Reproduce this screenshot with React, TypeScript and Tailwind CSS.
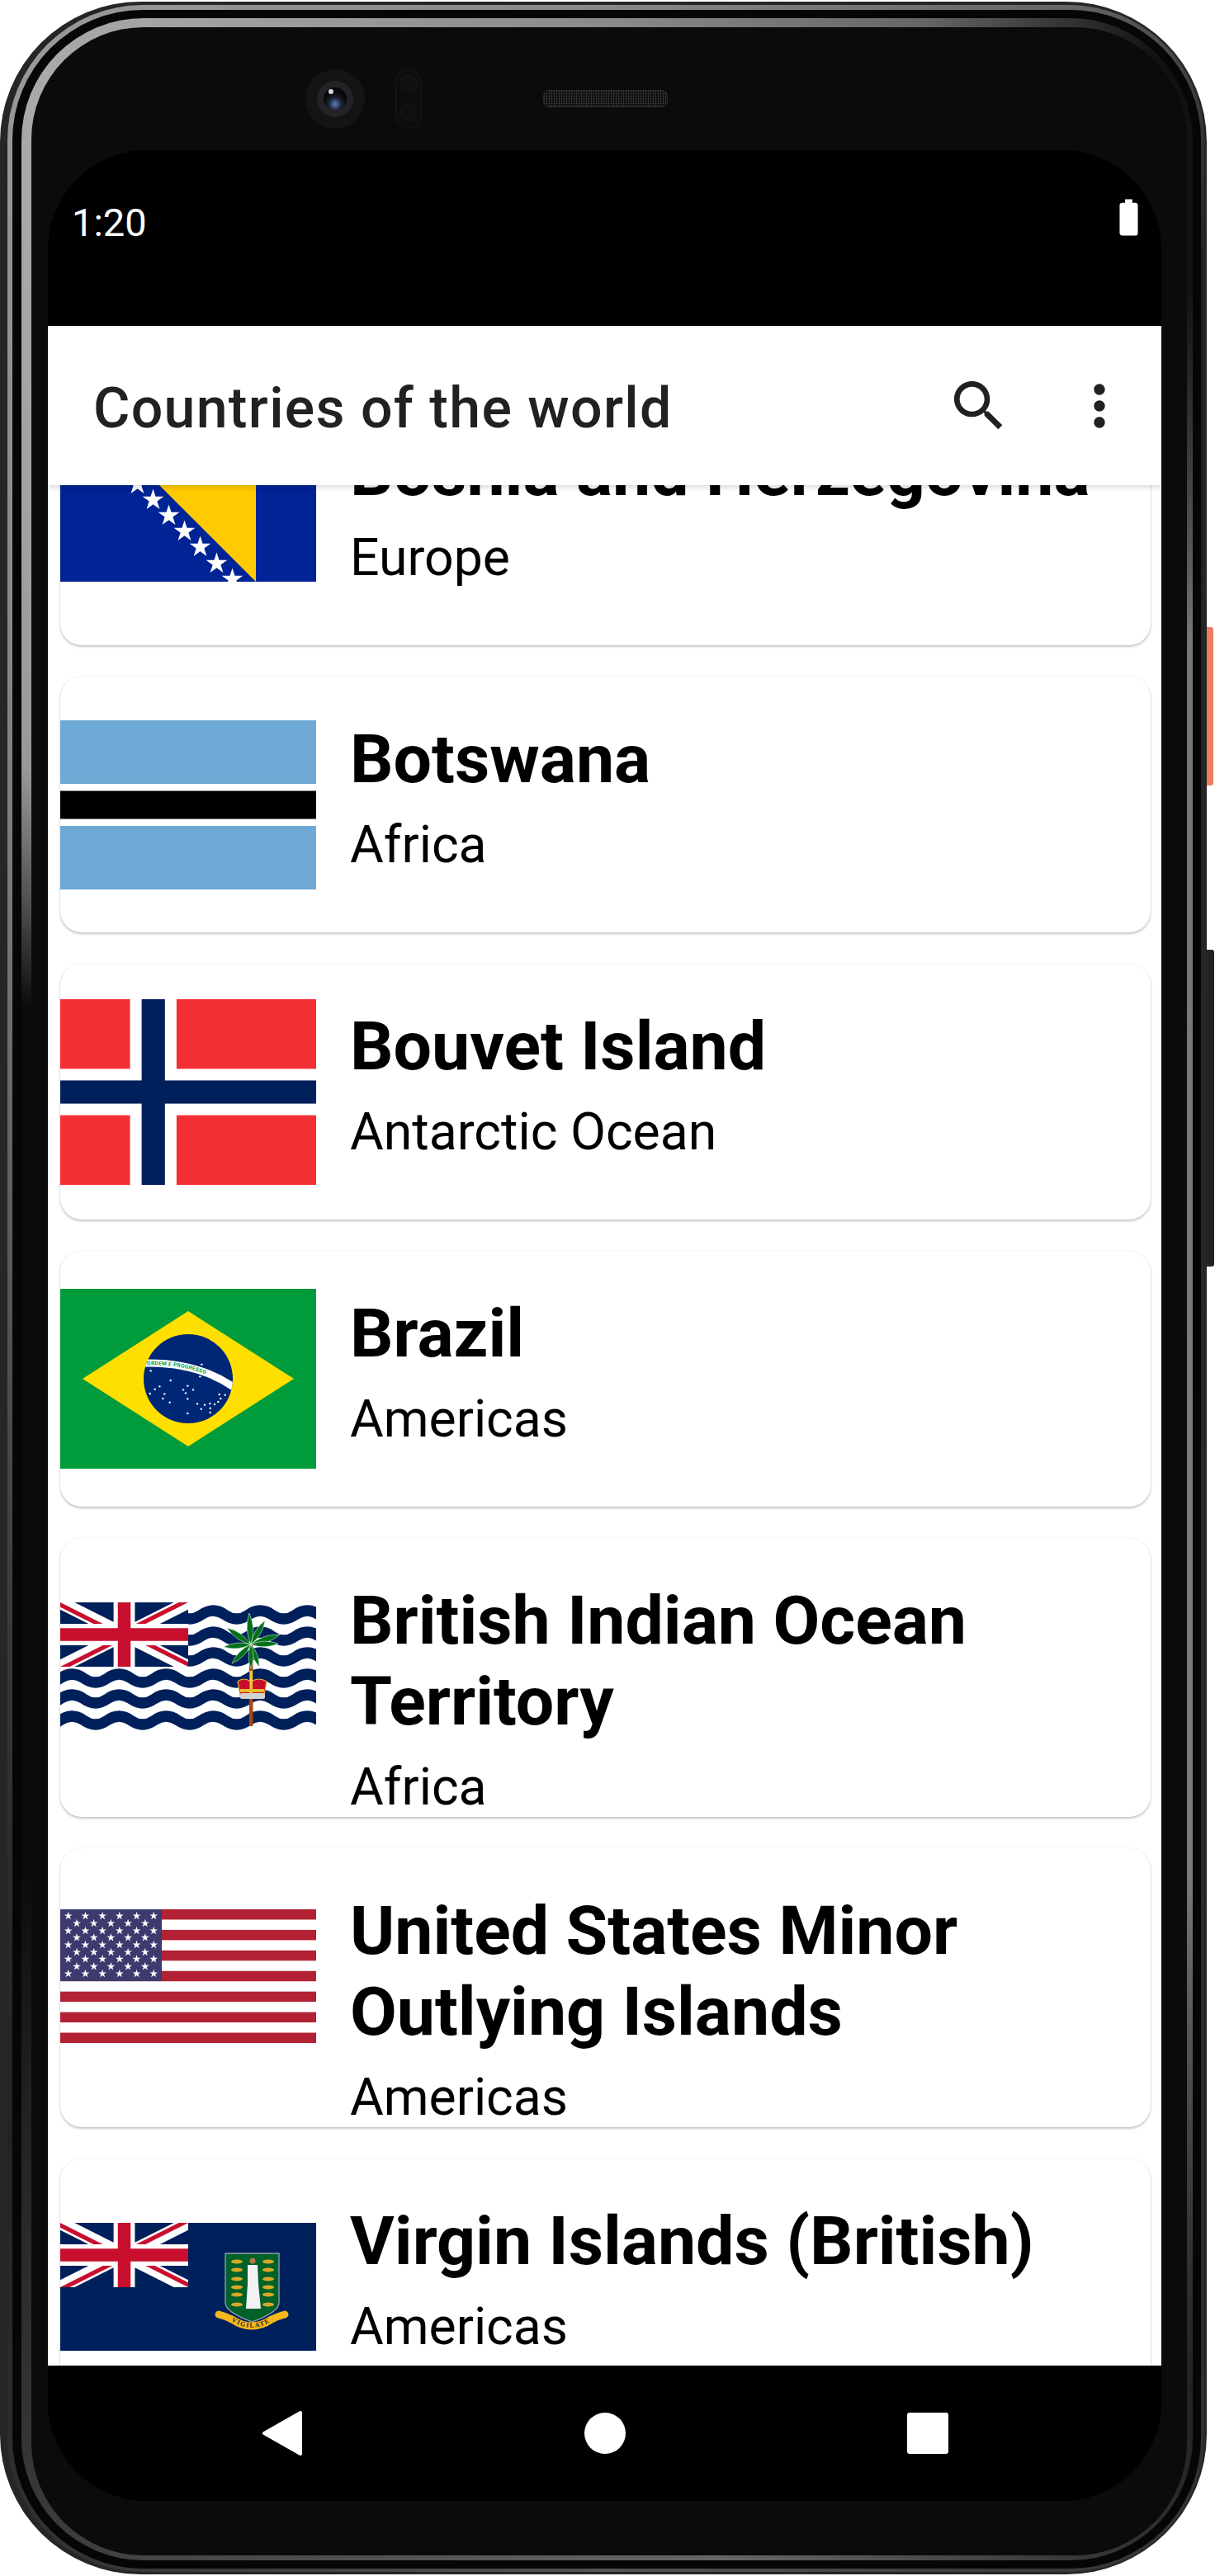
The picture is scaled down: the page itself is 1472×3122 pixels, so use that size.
import type { ReactNode } from "react"

const starPoints = (cx: number, cy: number, r: number) =>
  Array.from({ length: 10 }, (_, i) => {
    const a = (Math.PI / 5) * i - Math.PI / 2
    const d = i % 2 === 0 ? r : r * 0.38
    return `${(cx + d * Math.cos(a)).toFixed(2)},${(cy + d * Math.sin(a)).toFixed(2)}`
  }).join(" ")

function UnionJack({ id }: { id: string }) {
  return (
    <svg x="0" y="0" width="155" height="78" viewBox="0 0 60 30" preserveAspectRatio="none">
      <clipPath id={id}>
        <path d="M30,15h30v15zv15h-30zh-30v-15zv-15h30z" />
      </clipPath>
      <rect width="60" height="30" fill="#00205b" />
      <path d="M0,0L60,30M60,0L0,30" stroke="#fff" strokeWidth="6" />
      <path d="M0,0L60,30M60,0L0,30" clipPath={`url(#${id})`} stroke="#c8102e" strokeWidth="4" />
      <path d="M30,0v30M0,15h60" stroke="#fff" strokeWidth="10" />
      <path d="M30,0v30M0,15h60" stroke="#c8102e" strokeWidth="6" />
    </svg>
  )
}

function Bosnia() {
  const stars = [-1, 18, 37, 56, 75, 94, 113, 133, 152]
  return (
    <svg width="310" height="155" viewBox="0 0 310 155">
      <rect width="310" height="155" fill="#002395" />
      <polygon points="82,0 237,0 237,155" fill="#fecb00" />
      {stars.map((y) => (
        <polygon key={y} points={starPoints(y + 56.5, y, 13.5)} fill="#fff" />
      ))}
    </svg>
  )
}

function Botswana() {
  return (
    <svg width="310" height="205" viewBox="0 0 310 205">
      <rect width="310" height="205" fill="#6fa9d6" />
      <rect y="77" width="310" height="51" fill="#fff" />
      <rect y="85.5" width="310" height="34" fill="#000" />
    </svg>
  )
}

function Norway() {
  return (
    <svg width="310" height="225" viewBox="0 0 22 16" preserveAspectRatio="none">
      <rect width="22" height="16" fill="#f42f33" />
      <rect x="6" width="4" height="16" fill="#fff" />
      <rect y="6" width="22" height="4" fill="#fff" />
      <rect x="7" width="2" height="16" fill="#00205b" />
      <rect y="7" width="22" height="2" fill="#00205b" />
    </svg>
  )
}

function Brazil() {
  const stars = [
    [548, 481], [620, 516], [580, 538], [563, 548], [545, 564], [598, 565], [592, 582], [617, 596], [666, 550],
    [682, 536], [702, 550], [675, 562], [682, 583], [717, 601], [744, 605], [731, 620], [763, 600], [764, 617],
    [764, 633], [780, 603], [793, 594], [797, 567], [818, 569], [802, 582], [682, 636], [727, 502], [733, 458],
  ]
  return (
    <svg width="310" height="218" viewBox="0 0 310 218">
      <rect width="310" height="218" fill="#009b3a" />
      <polygon points="27,109 155,27 283,109 155,191" fill="#fedf00" />
      <clipPath id="globe">
        <circle cx="155" cy="109" r="54" />
      </clipPath>
      <circle cx="155" cy="109" r="54" fill="#002776" />
      <g clipPath="url(#globe)">
        <path d="M100 90 Q165 88 210 119" fill="none" stroke="#fff" strokeWidth="9" />
      </g>
      <path id="band" d="M102 92.5 Q165 90 210 121" fill="none" />
      <text fontFamily="Roboto, sans-serif" fontSize="6.4" fontWeight="700" fill="#009b3a" letterSpacing="0.4">
        <textPath href="#band" startOffset="3">
          ORDEM E PROGRESSO
        </textPath>
      </text>
      {stars.map(([x, y]) => (
        <circle key={`${x}-${y}`} cx={x / 3 - 73} cy={y / 3 - 61} r="1.2" fill="#fff" />
      ))}
    </svg>
  )
}

function Biot() {
  const wave = (y: number) => {
    let d = `M-57 ${y} q14.25 -10 28.5 0`
    for (let i = 0; i < 13; i++) d += " t28.5 0"
    return d
  }
  const leaves = [
    [229, 13], [248, 22], [266, 39], [264, 50], [202, 31], [198, 54], [208, 74], [241, 78], [231, 80],
  ]
  return (
    <svg width="310" height="155" viewBox="0 0 310 155">
      <rect width="310" height="155" fill="#fff" />
      {[15, 41, 66, 92, 117, 143].map((y) => (
        <path key={y} d={wave(y)} fill="none" stroke="#00205b" strokeWidth="13" />
      ))}
      <UnionJack id="biot-jack" />
      <rect x="229" y="50" width="4.5" height="100" fill="#a5490f" />
      {leaves.map(([x, y]) => {
        const mx = (231 + x) / 2
        const my = (51 + y) / 2
        const nx = (y - 51) * 0.2
        const ny = (231 - x) * 0.2
        return (
          <path
            key={`${x}-${y}`}
            d={`M231 51 Q${mx + nx} ${my + ny} ${x} ${y} Q${mx - nx} ${my - ny} 231 51Z`}
            fill="#00701a"
            stroke="#d8e8d8"
            strokeWidth="0.6"
          />
        )
      })}
      <path d="M215 96 Q222 90 231 96 Q241 90 250 96 L247 113 H218 Z" fill="#c8102e" stroke="#e5b93a" strokeWidth="1.2" />
      <rect x="229.5" y="83" width="3.5" height="30" fill="#f0c93a" />
      <rect x="218" y="105" width="29" height="4" fill="#e8bb2c" />
      <rect x="218" y="110" width="30" height="7" rx="2" fill="#d2d2d2" />
    </svg>
  )
}

function Usa() {
  const rows = [8, 17, 26, 34.3, 43, 52, 60.3, 69.3, 78]
  return (
    <svg width="310" height="162" viewBox="0 0 310 162">
      <rect width="310" height="162" fill="#fff" />
      {[0, 2, 4, 6, 8, 10, 12].map((i) => (
        <rect key={i} y={i * 12.46} width="310" height="12.46" fill="#b22234" />
      ))}
      <rect width="123" height="87" fill="#3c3b6e" />
      {rows.map((y, r) =>
        Array.from({ length: r % 2 === 0 ? 6 : 5 }, (_, i) => (
          <polygon key={`${r}-${i}`} points={starPoints((r % 2 === 0 ? 9.7 : 20) + i * 20.7, y, 5.2)} fill="#fff" />
        )),
      )}
    </svg>
  )
}

function VirginIslands() {
  const lampRows = [47, 57, 68, 78, 87, 99]
  return (
    <svg width="310" height="155" viewBox="0 0 310 155">
      <rect width="310" height="155" fill="#00205b" />
      <UnionJack id="vg-jack" />
      <path d="M200 37 H265 V97 Q265 108 232.5 120 Q200 108 200 97 Z" fill="#006129" stroke="#8f9cae" strokeWidth="1.4" />
      {lampRows.map((y) => (
        <g key={y} fill="#d9a826">
          <ellipse cx="214" cy={y} rx="7" ry="2.4" />
          <ellipse cx="252" cy={y} rx="7" ry="2.4" />
        </g>
      ))}
      <circle cx="233" cy="46" r="3.6" fill="#b9764a" />
      <path d="M227 51 H239 L240 74 L243 104 H225 L227 74 Z" fill="#f2f2f2" />
      <path
        id="vg-scroll"
        d="M192 111 Q200 113 208 117 Q232 133 256 117 Q264 113 272 111"
        fill="none"
        stroke="#f5b81c"
        strokeWidth="9"
        strokeLinecap="round"
      />
      <text fontFamily="Liberation Serif, serif" fontSize="8" fontWeight="700" fill="#222">
        <textPath href="#vg-scroll" startOffset="17" dominantBaseline="middle" letterSpacing="1.2">
          VIGILATE
        </textPath>
      </text>
    </svg>
  )
}

type Country = { name: string; region: string; flag: ReactNode }

const countries: Country[] = [
  { name: "Bosnia and Herzegovina", region: "Europe", flag: <Bosnia /> },
  { name: "Botswana", region: "Africa", flag: <Botswana /> },
  { name: "Bouvet Island", region: "Antarctic Ocean", flag: <Norway /> },
  { name: "Brazil", region: "Americas", flag: <Brazil /> },
  { name: "British Indian Ocean Territory", region: "Africa", flag: <Biot /> },
  { name: "United States Minor Outlying Islands", region: "Americas", flag: <Usa /> },
  { name: "Virgin Islands (British)", region: "Americas", flag: <VirginIslands /> },
]

function CountryCard({ country }: { country: Country }) {
  return (
    <div className="flex min-h-[310px] items-start overflow-hidden rounded-[26px] bg-white shadow-[0_2px_3px_rgba(0,0,0,0.22),0_0_2px_rgba(0,0,0,0.1)]">
      <div className="flex h-[310px] w-[310px] shrink-0 items-center">{country.flag}</div>
      <div className="ml-[41px] pt-[51px] pr-8">
        <h2 className="text-[82.4px] leading-[98px] font-bold text-black">{country.name}</h2>
        <p className="mt-[19px] text-[62.5px] leading-[72px] font-normal text-black">{country.region}</p>
      </div>
    </div>
  )
}

export default function App() {
  return (
    <div className="flex h-[3122px] w-[1472px] bg-white font-['Roboto',sans-serif]">
      {/* Phone frame */}
      <div className="mt-[2px] h-[3118px] w-[1462px] shrink-0 rounded-[170px] bg-[#262626] pt-[4px] pr-[3px] pb-[3px] pl-[9px]">
        <div className="h-full rounded-[164px] bg-[conic-gradient(#888_0deg,#666_20deg,#222_30deg,#2c2c2c_150deg,#555_180deg,#222_215deg,#6a6a6a_290deg,#999_335deg,#888_360deg)] pt-[6px] pr-[4px] pb-[4px] pl-[6px]">
          <div className="h-full rounded-[158px] bg-[#060607] pt-[10px] pr-[10px] pb-[10px] pl-[11px]">
            <div className="h-full rounded-[148px] bg-[conic-gradient(#8a8a8a_0deg,#666_14deg,#111_24deg,#111_30deg,#777_42deg,#7a7a7a_135deg,#222_152deg,#666_175deg,#444_200deg,#0b0b0d_225deg,#0b0b0d_296deg,#999_312deg,#aaa_335deg,#8a8a8a_360deg)] pt-[11px] pr-[7px] pb-[6px] pl-[12px]">
              <div className="flex h-full flex-col rounded-[136px] bg-[#0b0b0d] pr-[31px] pl-[20px]">
                {/* Camera and speaker */}
                <div className="flex h-[149px] shrink-0 items-center pt-[24px] pl-[311px]">
                  <svg width="74" height="74" viewBox="0 0 74 74">
                    <defs>
                      <radialGradient id="lens" cx="0.5" cy="0.72" r="0.5">
                        <stop offset="0" stopColor="#5f7fc0" />
                        <stop offset="0.55" stopColor="#1b2233" />
                        <stop offset="1" stopColor="#08080b" />
                      </radialGradient>
                    </defs>
                    <circle cx="37" cy="37" r="36" fill="#141416" />
                    <circle cx="37" cy="37" r="22" fill="#232326" />
                    <circle cx="37" cy="37" r="14" fill="url(#lens)" />
                    <circle cx="32" cy="28" r="3" fill="#d8d8d8" />
                  </svg>
                  <svg className="ml-[36px]" width="32" height="72" viewBox="0 0 32 72">
                    <rect x="0.5" y="0.5" width="31" height="71" rx="15.5" fill="#0d0d0f" stroke="#1b1b1e" />
                    <circle cx="16" cy="17" r="10" fill="#101013" stroke="#18181b" />
                    <circle cx="16" cy="52" r="10" fill="#101013" stroke="#18181b" />
                  </svg>
                  <svg className="ml-[147px]" width="151" height="21" viewBox="0 0 151 21">
                    <defs>
                      <pattern id="mesh" width="3" height="3" patternUnits="userSpaceOnUse">
                        <rect width="3" height="3" fill="#0a0a0c" />
                        <circle cx="1.5" cy="1.5" r="0.9" fill="#46464a" />
                      </pattern>
                    </defs>
                    <rect x="0.5" y="0.5" width="150" height="20" rx="7" fill="url(#mesh)" stroke="#2a2a2c" />
                  </svg>
                </div>

                {/* Screen */}
                <div className="flex h-[2849px] shrink-0 flex-col overflow-hidden rounded-[120px] bg-black">
                  <div className="flex h-[213px] shrink-0 items-start justify-between pt-[60px] pr-[13px] pl-[29px] text-white">
                    <span className="text-[47px] leading-[56px]">1:20</span>
                    <svg className="-mt-[5px]" width="53" height="53" viewBox="0 0 24 24" fill="#fff">
                      <path d="M15.67 4H14V2h-4v2H8.33C7.6 4 7 4.6 7 5.33v15.33C7 21.4 7.6 22 8.33 22h7.33c.74 0 1.34-.6 1.34-1.33V5.33C17 4.6 16.4 4 15.67 4z" />
                    </svg>
                  </div>

                  <div className="relative z-10 flex h-[193px] shrink-0 items-center bg-white pr-[35px] pl-[55px] shadow-[0_3px_6px_rgba(0,0,0,0.14)]">
                    <h1 className="mt-[6px] flex-1 text-[68px] leading-[80px] font-medium tracking-[1.3px] text-[#212121]">
                      Countries of the world
                    </h1>
                    <svg width="80" height="80" viewBox="0 0 24 24" fill="#212121">
                      <path d="M15.5 14h-.79l-.28-.27C15.41 12.59 16 11.11 16 9.5 16 5.91 13.09 3 9.5 3S3 5.91 3 9.5 5.91 16 9.5 16c1.61 0 3.09-.59 4.23-1.57l.27.28v.79l5 4.99L20.49 19l-4.99-5zm-6 0C7.01 14 5 11.99 5 9.5S7.01 5 9.5 5 14 7.01 14 9.5 11.99 14 9.5 14z" />
                    </svg>
                    <svg className="ml-[66px]" width="80" height="80" viewBox="0 0 24 24" fill="#212121">
                      <path d="M12 8c1.1 0 2-.9 2-2s-.9-2-2-2-2 .9-2 2 .9 2 2 2zm0 2c-1.1 0-2 .9-2 2s.9 2 2 2 2-.9 2-2-.9-2-2-2zm0 6c-1.1 0-2 .9-2 2s.9 2 2 2 2-.9 2-2-.9-2-2-2z" />
                    </svg>
                  </div>

                  <div className="h-[2279px] shrink-0 overflow-hidden bg-white">
                    <div className="-mt-[116px] flex flex-col gap-[38px] pr-[13px] pl-[15px]">
                      {countries.map((c) => (
                        <CountryCard key={c.name} country={c} />
                      ))}
                    </div>
                  </div>

                  <div className="flex h-[164px] shrink-0 items-center justify-center gap-[341px] bg-black">
                    <svg width="50" height="56" viewBox="0 0 50 56">
                      <path d="M47 3 L3 28 L47 53 Z" fill="#fff" stroke="#fff" strokeWidth="4" strokeLinejoin="round" />
                    </svg>
                    <svg width="50" height="50" viewBox="0 0 50 50">
                      <circle cx="25" cy="25" r="25" fill="#fff" />
                    </svg>
                    <svg width="50" height="50" viewBox="0 0 50 50">
                      <rect width="50" height="50" rx="3" fill="#fff" />
                    </svg>
                  </div>
                </div>
              </div>
            </div>
          </div>
        </div>
      </div>

      {/* Side buttons */}
      <div className="flex flex-col">
        <div className="mt-[760px] h-[192px] w-[8px] rounded-r-[3px] bg-[#ee7d5f]" />
        <div className="mt-[199px] h-[384px] w-[9px] rounded-r-[3px] bg-[#232323]" />
      </div>
    </div>
  )
}
